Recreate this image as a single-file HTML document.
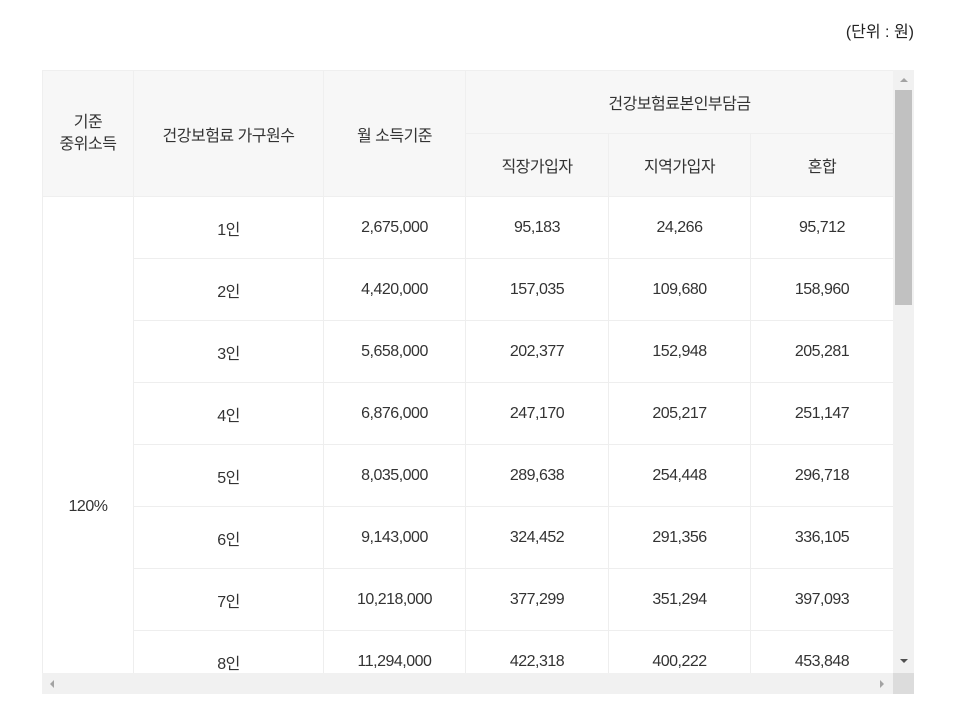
<!DOCTYPE html><html><head><meta charset="utf-8"><style>
html,body{margin:0;width:957px;height:704px;overflow:hidden}
body{background:#fff;font-family:"Liberation Sans","Noto Sans CJK KR",sans-serif;color:#333;position:relative}
.unit{position:absolute;right:43px;top:18px;font-size:16px;color:#222}
.wrap{position:absolute;left:42px;top:70px;width:851px;height:603px;overflow:hidden}
table{border-collapse:collapse;width:851px;table-layout:fixed;font-size:16px;letter-spacing:-0.5px}
td,th{text-align:center;font-weight:normal;border:1px solid #eeeeee;padding:0;color:#333}
th{background:#f7f7f7;border-color:#efefef}
tr.b td{height:61px}
.vs{position:absolute;left:893px;top:70px;width:21px;height:603px;background:#f1f1f1}
.thumb{position:absolute;left:2px;top:20px;width:17px;height:215px;background:#c1c1c1}
.hs{position:absolute;left:42px;top:673px;width:851px;height:21px;background:#f1f1f1}
.corner{position:absolute;left:893px;top:673px;width:21px;height:21px;background:#dcdcdc}
.arr{position:absolute;width:0;height:0}
</style></head><body>
<div class="unit">(단위 : 원)</div>
<div class="wrap"><table>
<colgroup><col style="width:91px"><col style="width:190px"><col style="width:142px"><col style="width:143px"><col style="width:142px"><col style="width:143px"></colgroup>
<tr><th rowspan="2" style="height:125px;line-height:22px">기준<br>중위소득</th><th rowspan="2">건강보험료 가구원수</th><th rowspan="2">월 소득기준</th><th colspan="3" style="height:62px">건강보험료본인부담금</th></tr>
<tr><th style="height:62px">직장가입자</th><th>지역가입자</th><th>혼합</th></tr>
<tr class="b"><td rowspan="10">120%</td><td>1인</td><td>2,675,000</td><td>95,183</td><td>24,266</td><td>95,712</td></tr>
<tr class="b"><td>2인</td><td>4,420,000</td><td>157,035</td><td>109,680</td><td>158,960</td></tr>
<tr class="b"><td>3인</td><td>5,658,000</td><td>202,377</td><td>152,948</td><td>205,281</td></tr>
<tr class="b"><td>4인</td><td>6,876,000</td><td>247,170</td><td>205,217</td><td>251,147</td></tr>
<tr class="b"><td>5인</td><td>8,035,000</td><td>289,638</td><td>254,448</td><td>296,718</td></tr>
<tr class="b"><td>6인</td><td>9,143,000</td><td>324,452</td><td>291,356</td><td>336,105</td></tr>
<tr class="b"><td>7인</td><td>10,218,000</td><td>377,299</td><td>351,294</td><td>397,093</td></tr>
<tr class="b"><td>8인</td><td>11,294,000</td><td>422,318</td><td>400,222</td><td>453,848</td></tr>
<tr class="b"><td>9인</td><td>12,370,000</td><td>460,000</td><td>450,000</td><td>500,000</td></tr>
<tr class="b"><td>10인</td><td>13,446,000</td><td>500,000</td><td>490,000</td><td>540,000</td></tr>
</table></div>
<div class="vs"><div class="thumb"></div>
<div class="arr" style="left:7px;top:8px;border-left:4px solid transparent;border-right:4px solid transparent;border-bottom:4px solid #a3a3a3"></div>
<div class="arr" style="left:7px;top:589px;border-left:4px solid transparent;border-right:4px solid transparent;border-top:4px solid #505050"></div></div>
<div class="hs">
<div class="arr" style="left:8px;top:7px;border-top:4px solid transparent;border-bottom:4px solid transparent;border-right:4px solid #a3a3a3"></div>
<div class="arr" style="left:838px;top:7px;border-top:4px solid transparent;border-bottom:4px solid transparent;border-left:4px solid #a3a3a3"></div></div>
<div class="corner"></div>
</body></html>
